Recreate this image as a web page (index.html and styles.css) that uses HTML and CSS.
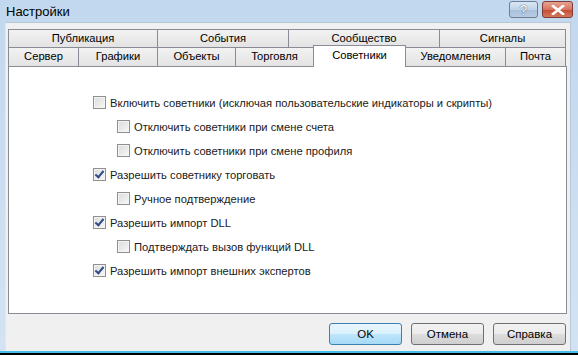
FILE: index.html
```html
<!DOCTYPE html>
<html lang="ru">
<head>
    <meta charset="UTF-8">
    <title>Настройки</title>
    <link rel="stylesheet" href="styles.css">
</head>
<body>
    <div class="window">
        <header class="title-bar">
            <span class="title">Настройки</span>
            <div class="caption-buttons">
                <button class="cap-btn help-btn">?</button>
                <button class="cap-btn close-btn">
                    <svg width="14" height="10" viewBox="0 0 14 10"><path d="M2 1 L12 9 M12 1 L2 9" stroke="#fff" stroke-width="2.6" stroke-linecap="square"/></svg>
                </button>
            </div>
        </header>
        <div class="client">
            <div class="tabs">
                <div class="tab-row">
                    <div class="tab w-pub">Публикация</div>
                    <div class="tab w-ev">События</div>
                    <div class="tab w-com">Сообщество</div>
                    <div class="tab w-sig">Сигналы</div>
                </div>
                <div class="tab-row">
                    <div class="tab w-srv">Сервер</div>
                    <div class="tab w-gr">Графики</div>
                    <div class="tab w-obj">Объекты</div>
                    <div class="tab w-tr">Торговля</div>
                    <div class="tab w-adv active">Советники</div>
                    <div class="tab w-not">Уведомления</div>
                    <div class="tab w-mail">Почта</div>
                </div>
            </div>
            <main class="panel">
                <label class="option"><span class="check"></span>Включить советники (исключая пользовательские индикаторы и скрипты)</label>
                <label class="option sub"><span class="check"></span>Отключить советники при смене счета</label>
                <label class="option sub"><span class="check"></span>Отключить советники при смене профиля</label>
                <label class="option"><span class="check checked"></span>Разрешить советнику торговать</label>
                <label class="option sub"><span class="check"></span>Ручное подтверждение</label>
                <label class="option"><span class="check checked"></span>Разрешить импорт DLL</label>
                <label class="option sub"><span class="check"></span>Подтверждать вызов функций DLL</label>
                <label class="option"><span class="check checked"></span>Разрешить импорт внешних экспертов</label>
            </main>
            <footer class="dialog-footer">
                <button class="btn default">OK</button>
                <button class="btn">Отмена</button>
                <button class="btn">Справка</button>
            </footer>
        </div>
    </div>
</body>
</html>
```

FILE: styles.css
```css
* {
    margin: 0;
    padding: 0;
    box-sizing: border-box;
}

body {
    background: #000;
    font-family: 'Liberation Sans', Arial, sans-serif;
    font-size: 11.2px;
    color: #000;
    width: 578px;
    height: 355px;
    overflow: hidden;
}

.window {
    height: 353px;
    background: linear-gradient(#c2d8ee, #d3e3f3);
    border-bottom: 2px solid #40c0e8;
    padding: 0 7px 0 5px;
    display: flex;
    flex-direction: column;
}

.title-bar {
    height: 22px;
    display: flex;
    align-items: center;
    justify-content: space-between;
    margin: 0 -7px 0 -5px;
    padding-left: 6px;
}

.title {
    font-size: 13px;
}

.caption-buttons {
    display: flex;
    gap: 4px;
    align-self: flex-start;
    margin-top: 1px;
    margin-right: 5px;
}

.cap-btn {
    height: 17px;
    border: 1px solid #6d7f95;
    border-radius: 3px;
    display: flex;
    align-items: center;
    justify-content: center;
}

.help-btn {
    width: 29px;
    background: linear-gradient(#dbe7f4 0%, #c1d3e8 50%, #a8bfd9 51%, #b8cde4 100%);
    color: #fff;
    font-size: 14px;
    text-shadow: 0 0 1px #455a75, 0 0 1px #455a75;
}

.close-btn {
    width: 31px;
    border-color: #7e3a33;
    background: linear-gradient(#e6a393 0%, #d6735f 50%, #c34a33 51%, #d37a5c 100%);
}

.client {
    flex: 1;
    background: #f0f0f0;
    border-left: 1px solid #dde8f3;
    border-top: 1px solid #b7c8da;
    border-right: 1px solid #b7c8da;
    padding: 6px 4px 0 2px;
    display: flex;
    flex-direction: column;
}

.tabs {
    display: flex;
    flex-direction: column;
    position: relative;
    z-index: 1;
}

.tab-row {
    display: flex;
    height: 18px;
}

.tab-row + .tab-row {
    height: 19px;
}

.tab {
    border: 1px solid #898c95;
    border-bottom: none;
    border-right: none;
    background: linear-gradient(#f2f2f2, #e3e3e3);
    text-align: center;
    line-height: 17px;
    white-space: nowrap;
}

.tab:last-child {
    border-right: 1px solid #898c95;
}

.tab.active {
    background: #fff;
    margin-top: -2px;
    height: 22px;
    border-right: 1px solid #898c95;
    line-height: 18px;
}

.tab.active + .tab {
    border-left: none;
}

.w-pub { width: 149px; }
.w-ev { width: 131px; }
.w-com { width: 151px; }
.w-sig { width: 127px; }

.w-srv { width: 70px; }
.w-gr { width: 79px; }
.w-obj { width: 78px; }
.w-tr { width: 78px; }
.w-adv { width: 93px; }
.w-not { width: 99px; }
.w-mail { width: 61px; }

.panel {
    height: 248px;
    width: 559px;
    background: #fff;
    border: 1px solid #898c95;
    padding: 29px 0 0 84px;
    display: flex;
    flex-direction: column;
}

.option {
    display: flex;
    align-items: center;
    height: 13px;
    margin-bottom: 11px;
    color: #1a1a1a;
    white-space: nowrap;
}

.option.sub {
    margin-left: 24px;
}

.check {
    width: 13px;
    height: 13px;
    margin-right: 4px;
    border: 1px solid #8f8f8f;
    background: linear-gradient(135deg, #dcdcdc, #f6f6f6);
    box-shadow: inset 0 0 0 1px #f4f4f4;
    position: relative;
}

.check.checked::after {
    content: "";
    position: absolute;
    left: 3px;
    top: 0px;
    width: 3px;
    height: 7px;
    border: solid #2a4a8a;
    border-width: 0 2px 2px 0;
    transform: rotate(40deg);
}

.dialog-footer {
    display: flex;
    justify-content: flex-end;
    gap: 9px;
    padding: 9px 0 0 0;
}

.btn {
    width: 73px;
    height: 22px;
    font-family: 'Liberation Sans', sans-serif;
    font-size: 11.5px;
    border: 1px solid #707070;
    border-radius: 3px;
    background: linear-gradient(#f2f2f2 0%, #ebebeb 50%, #dddddd 51%, #cfcfcf 100%);
}

.btn.default {
    border-color: #3c7fb1;
    background: linear-gradient(#eaf6fd 0%, #d9f0fc 50%, #bee6fd 51%, #a7d9f5 100%);
}
```
